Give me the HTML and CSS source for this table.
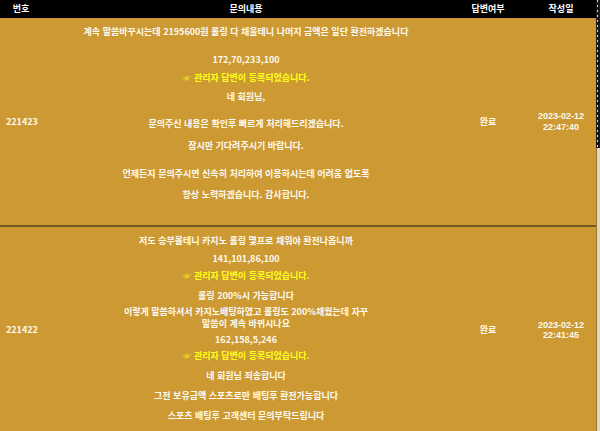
FILE: index.html
```html
<!DOCTYPE html>
<html lang="ko">
<head>
<meta charset="utf-8">
<link rel="stylesheet" href="styles.css">
</head>
<body>
<div class="page">
  <table class="board">
    <colgroup>
      <col class="c-no"><col class="c-body"><col class="c-state"><col class="c-date">
    </colgroup>
    <thead>
      <tr><th>번호</th><th>문의내용</th><th>답변여부</th><th>작성일</th></tr>
    </thead>
    <tbody>
      <tr class="r1">
        <td class="no">221423</td>
        <td class="body">
          <p>계속 말씀바꾸시는데 2195600원 롤링 다 채울테니 나머지 금액은 일단 환전하겠습니다</p>
          <p class="g18">172,70,233,100</p>
          <p class="g8 notice">☞ 관리자 답변이 등록되었습니다.</p>
          <p class="g9">네 회원님,</p>
          <p class="g17">문의주신 내용은 확인후 빠르게 처리해드리겠습니다.</p>
          <p class="g12">잠시만 기다려주시기 바랍니다.</p>
          <p class="g18">언제든지 문의주시면 신속히 처리하여 이용하시는데 어려움 없도록</p>
          <p class="g11">항상 노력하겠습니다. 감사합니다.</p>
        </td>
        <td class="state">완료</td>
        <td class="date">2023-02-12<br>22:47:40</td>
      </tr>
      <tr class="r2">
        <td class="no">221422</td>
        <td class="body">
          <p>저도 승부볼테니 카지노 롤링 몇프로 채워야 환전나옵니까</p>
          <p class="g8">141,101,86,100</p>
          <p class="g7 notice">☞ 관리자 답변이 등록되었습니다.</p>
          <p class="g10">롤링 200%시 가능합니다</p>
          <p class="g5 two">이렇게 말씀하셔서 카지노배팅하였고 롤링도 200%채웠는데 자꾸<br>말씀이 계속 바뀌시나요</p>
          <p class="g5">162,158,5,246</p>
          <p class="g6 notice">☞ 관리자 답변이 등록되었습니다.</p>
          <p class="g10">네 회원님 죄송합니다</p>
          <p class="g10">그전 보유금액 스포츠로만 배팅후 환전가능합니다</p>
          <p class="g10">스포츠 배팅후 고객센터 문의부탁드립니다</p>
        </td>
        <td class="state">완료</td>
        <td class="date">2023-02-12<br>22:41:45</td>
      </tr>
    </tbody>
  </table>
  <div class="rail">
    <div class="rail-top"></div>
    <div class="rail-bottom"></div>
  </div>
</div>
</body>
</html>
```
FILE: styles.css
```css
html, body {
  margin: 0;
  padding: 0;
  background: #cc9933;
  overflow: hidden;
}
.page {
  display: flex;
  width: 600px;
  height: 431px;
  overflow: hidden;
  font-family: "Noto Sans CJK KR", "Noto Sans", sans-serif;
  font-weight: 700;
  font-size: 9px;
  color: #fffaf0;
}
.board {
  width: 596px;
  flex: none;
  border-collapse: collapse;
  table-layout: fixed;
  align-self: flex-start;
}
.c-no { width: 42px; }
.c-body { width: 408px; }
.c-state { width: 76px; }
.c-date { width: 70px; }
.board th {
  background: #000;
  color: #fff;
  height: 18px;
  padding: 0;
  line-height: 10px;
  font-weight: 700;
  text-align: center;
  vertical-align: middle;
}
.board td {
  padding: 0;
  vertical-align: middle;
  line-height: 10px;
}
.r1 td { border-bottom: 2px solid #765a24; }
.r1 .body { padding: 9px 0 25px; }
.r2 .body { padding: 9px 0 12px; }
.no { padding-left: 6px !important; text-align: left; }
.body { text-align: center; }
.body p { margin: 0; }
.body .two { line-height: 12px; }
.state, .date { text-align: center; }
.board .date {
  font-family: "Liberation Sans", Arial, sans-serif;
  line-height: 10.5px;
}
.notice { color: #ffff1a; }
.g5 { margin-top: 5px !important; }
.g6 { margin-top: 6px !important; }
.g7 { margin-top: 7px !important; }
.g8 { margin-top: 8px !important; }
.g9 { margin-top: 9px !important; }
.g10 { margin-top: 10px !important; }
.g11 { margin-top: 11px !important; }
.g12 { margin-top: 12px !important; }
.g17 { margin-top: 17px !important; }
.g18 { margin-top: 18px !important; }
.rail {
  width: 4px;
  flex: none;
  display: flex;
  flex-direction: column;
}
.rail-top {
  height: 148px;
  background-color: #1a1a1a;
  background-image: repeating-linear-gradient(to bottom, #d8d8d8 0 2px, transparent 2px 5px);
  background-size: 1px 100%;
  background-position: 1px 0;
  background-repeat: no-repeat;
}
.rail-bottom {
  flex: 1;
  background: #e2d8bf;
  border-left: 1px solid #9a7636;
}
```
